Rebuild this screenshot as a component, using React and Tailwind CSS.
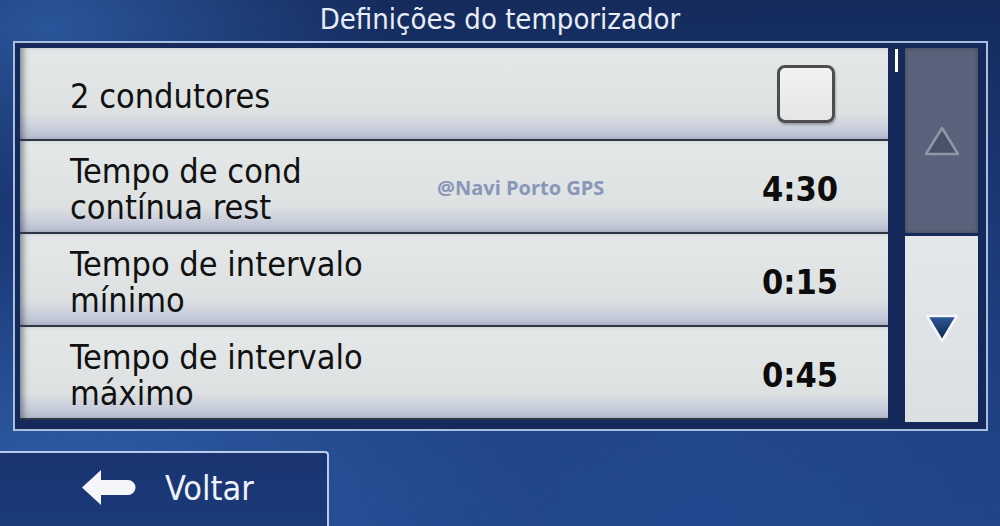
const rows = [
  { label: ["2 condutores"], checkbox: true },
  { label: ["Tempo de cond", "contínua rest"], value: "4:30", mark: true },
  { label: ["Tempo de intervalo", "mínimo"], value: "0:15" },
  { label: ["Tempo de intervalo", "máximo"], value: "0:45" },
];

function Row({ row }) {
  return (
    <div className="relative flex h-[93px] items-center border-b-2 border-[#2c3644] bg-[linear-gradient(to_bottom,#e4e8e8_0%,#dde1e2_72%,#c9cedb_88%,#b6bdcf_100%)] pl-[50px] pr-[50px] shadow-[inset_6px_0_6px_-3px_rgba(40,50,70,0.55)]">
      <div className="flex-1 pt-[4px] text-[34px] leading-[36px] text-[#111]">
        {row.label.map((l) => (
          <div key={l}>{l}</div>
        ))}
      </div>
      {row.mark && (
        <div className="absolute left-[417px] top-[32px] font-['Open_Sans',sans-serif] text-[20px] font-bold text-[#8797b8]">
          @Navi Porto GPS
        </div>
      )}
      {row.checkbox && (
        <div className="mr-[3px] h-[58px] w-[58px] rounded-[8px] border-[3px] border-[#4d4d4d] bg-[linear-gradient(to_bottom,#f2f2f2,#e6e6e6)] shadow-[1px_2px_2px_rgba(0,0,0,0.25)]" />
      )}
      {row.value && (
        <div className="mt-[5px] text-[34px] font-bold leading-none text-[#0c0c0c]">{row.value}</div>
      )}
    </div>
  );
}

export default function App() {
  return (
    <div className="flex h-[526px] w-[1000px] flex-col overflow-hidden bg-[radial-gradient(ellipse_at_8%_95%,#2f5ea6_0%,rgba(47,94,166,0)_35%),radial-gradient(ellipse_at_5%_5%,#2a559a_0%,rgba(42,85,154,0)_25%),radial-gradient(ellipse_at_70%_100%,#22498f_0%,rgba(34,73,143,0)_45%),linear-gradient(to_bottom,#152b5c_0%,#1c3a78_45%,#1f4286_100%)] font-['DejaVu_Sans_Condensed','DejaVu_Sans',sans-serif]">
      {/* title */}
      <div className="flex h-[41px] items-center justify-center pb-[1px] text-[29px] text-[#e8eef8]">
        Definições do temporizador
      </div>

      {/* list panel */}
      <div className="pl-[13px] pr-[12px]">
        <div className="flex h-[390px] border-2 border-[#a9bfe2] bg-[#15295a] pl-[5px] pr-[8px] pt-[5px] pb-[7px]">
          <div className="flex w-[868px] flex-col">
            {rows.map((r, i) => (
              <Row key={i} row={r} />
            ))}
          </div>

          {/* scroll */}
          <div className="flex flex-1">
            <div className="w-[17px] pl-[7px] pt-[1px]">
              <div className="h-[23px] w-[3px] bg-white" />
            </div>
            <div className="flex flex-1 flex-col gap-[3px]">
              <div className="flex h-[185px] items-center justify-center bg-[#59627a] shadow-[inset_0_0_4px_rgba(0,0,0,0.3)]">
                <svg width="38" height="32" viewBox="0 0 38 32">
                  <path d="M19 3 L35 29 L3 29 Z" fill="#4a5267" stroke="#8e96a8" strokeWidth="2.5" strokeLinejoin="round" />
                </svg>
              </div>
              <div className="flex flex-1 items-center justify-center bg-[linear-gradient(to_bottom,#e3e7ea,#dadfe3)] pb-[2px]">
                <svg width="36" height="32" viewBox="0 0 36 32">
                  <defs>
                    <linearGradient id="dn" x1="0" y1="0" x2="0" y2="1">
                      <stop offset="0" stopColor="#2d5a9a" />
                      <stop offset="1" stopColor="#0f2248" />
                    </linearGradient>
                  </defs>
                  <path d="M3 4 L33 4 L18 29 Z" fill="url(#dn)" stroke="#f4f6fa" strokeWidth="2.5" strokeLinejoin="round" />
                </svg>
              </div>
            </div>
          </div>
        </div>
      </div>

      {/* back button */}
      <div className="flex-1 pt-[20px]">
        <div className="flex h-full w-[329px] items-center rounded-tr-[4px] border-r-2 border-t-2 border-[#bccbe8] bg-[linear-gradient(to_bottom,#1a3470,#1b3a7a)] pb-[4px] pl-[82px]">
          <svg width="54" height="36" viewBox="0 0 54 36" className="mr-[29px]">
            <path d="M0 17.5 L19 0 L19 10 L46 10 A7.5 7.5 0 0 1 46 25 L19 25 L19 35 Z" fill="#f4f6fa" />
          </svg>
          <span className="text-[34px] leading-none text-[#eef2fa]">Voltar</span>
        </div>
      </div>
    </div>
  );
}
